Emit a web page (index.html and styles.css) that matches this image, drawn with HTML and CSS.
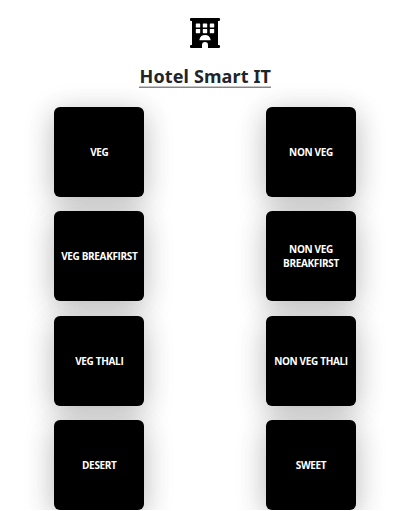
FILE: index.html
```html
<!DOCTYPE html>
<html lang="en">
<head>
<meta charset="utf-8">
<title>Hotel Smart IT</title>
<link rel="stylesheet" href="styles.css">
</head>
<body>
<header class="header">
  <svg class="logo" viewBox="0 0 30 30" aria-hidden="true">
    <path fill-rule="evenodd" d="M1 0H29Q30 0 30 1V2Q30 3 29 3H28V27H29Q30 27 30 28V29Q30 30 29 30H18V27A3 3 0 0 0 12 27V30H1Q0 30 0 29V28Q0 27 1 27H2V3H1Q0 3 0 2V1Q0 0 1 0Z
    M6.4 5.4H9.6Q10.2 5.4 10.2 6V9Q10.2 9.6 9.6 9.6H6.4Q5.8 9.6 5.8 9V6Q5.8 5.4 6.4 5.4Z
    M13.4 5.4H16.6Q17.2 5.4 17.2 6V9Q17.2 9.6 16.6 9.6H13.4Q12.8 9.6 12.8 9V6Q12.8 5.4 13.4 5.4Z
    M20.4 5.4H23.6Q24.2 5.4 24.2 6V9Q24.2 9.6 23.6 9.6H20.4Q19.8 9.6 19.8 9V6Q19.8 5.4 20.4 5.4Z
    M6.4 11H9.6Q10.2 11 10.2 11.6V14.6Q10.2 15.2 9.6 15.2H6.4Q5.8 15.2 5.8 14.6V11.6Q5.8 11 6.4 11Z
    M13.4 11H16.6Q17.2 11 17.2 11.6V14.6Q17.2 15.2 16.6 15.2H13.4Q12.8 15.2 12.8 14.6V11.6Q12.8 11 13.4 11Z
    M20.4 11H23.6Q24.2 11 24.2 11.6V14.6Q24.2 15.2 23.6 15.2H20.4Q19.8 15.2 19.8 14.6V11.6Q19.8 11 20.4 11Z
    M10.2 22.3Q9.2 22.3 9.4 21.4A5.8 5.8 0 0 1 20.6 21.4Q20.8 22.3 19.8 22.3Z"/>
  </svg>
  <h1 class="title">Hotel Smart IT</h1>
</header>
<main class="menu">
  <div class="tile">VEG</div>
  <div class="tile">NON VEG</div>
  <div class="tile">VEG BREAKFIRST</div>
  <div class="tile">NON VEG BREAKFIRST</div>
  <div class="tile">VEG THALI</div>
  <div class="tile">NON VEG THALI</div>
  <div class="tile">DESERT</div>
  <div class="tile">SWEET</div>
</main>
</body>
</html>
```
FILE: styles.css
```css
* { box-sizing: border-box; }
html { overflow: hidden; }
body {
  margin: 0;
  background: #fff;
  color: #212529;
  font-family: "Noto Sans", "Open Sans", sans-serif;
}
.header {
  display: flex;
  flex-direction: column;
  align-items: center;
  width: 410.6px;
  padding-top: 18px;
}
.logo { width: 30px; height: 30px; fill: #000; }
.title {
  margin: 17px 0 0;
  height: 23px;
  border-bottom: 1px solid #858585;
  box-shadow: inset 0 -1px #c4c4c4;
  font-size: 18px;
  font-weight: 700;
  line-height: 22px;
  letter-spacing: .13px;
  white-space: nowrap;
}
.menu {
  display: grid;
  grid-template-columns: 90px 90px;
  column-gap: 121.7px;
  row-gap: 14.4px;
  padding: 19px 0 0 54.3px;
}
.tile {
  display: flex;
  align-items: center;
  justify-content: center;
  height: 90px;
  border-radius: 6px;
  background: #000;
  box-shadow: 0 7px 29px rgba(100, 100, 111, .12), 0 6px 30px rgba(0, 0, 0, .22);
  color: #fff;
  font-family: "Open Sans", "Noto Sans", sans-serif;
  font-size: 10px;
  font-weight: 700;
  line-height: 14px;
  letter-spacing: -.34px;
  text-align: center;
}
```
